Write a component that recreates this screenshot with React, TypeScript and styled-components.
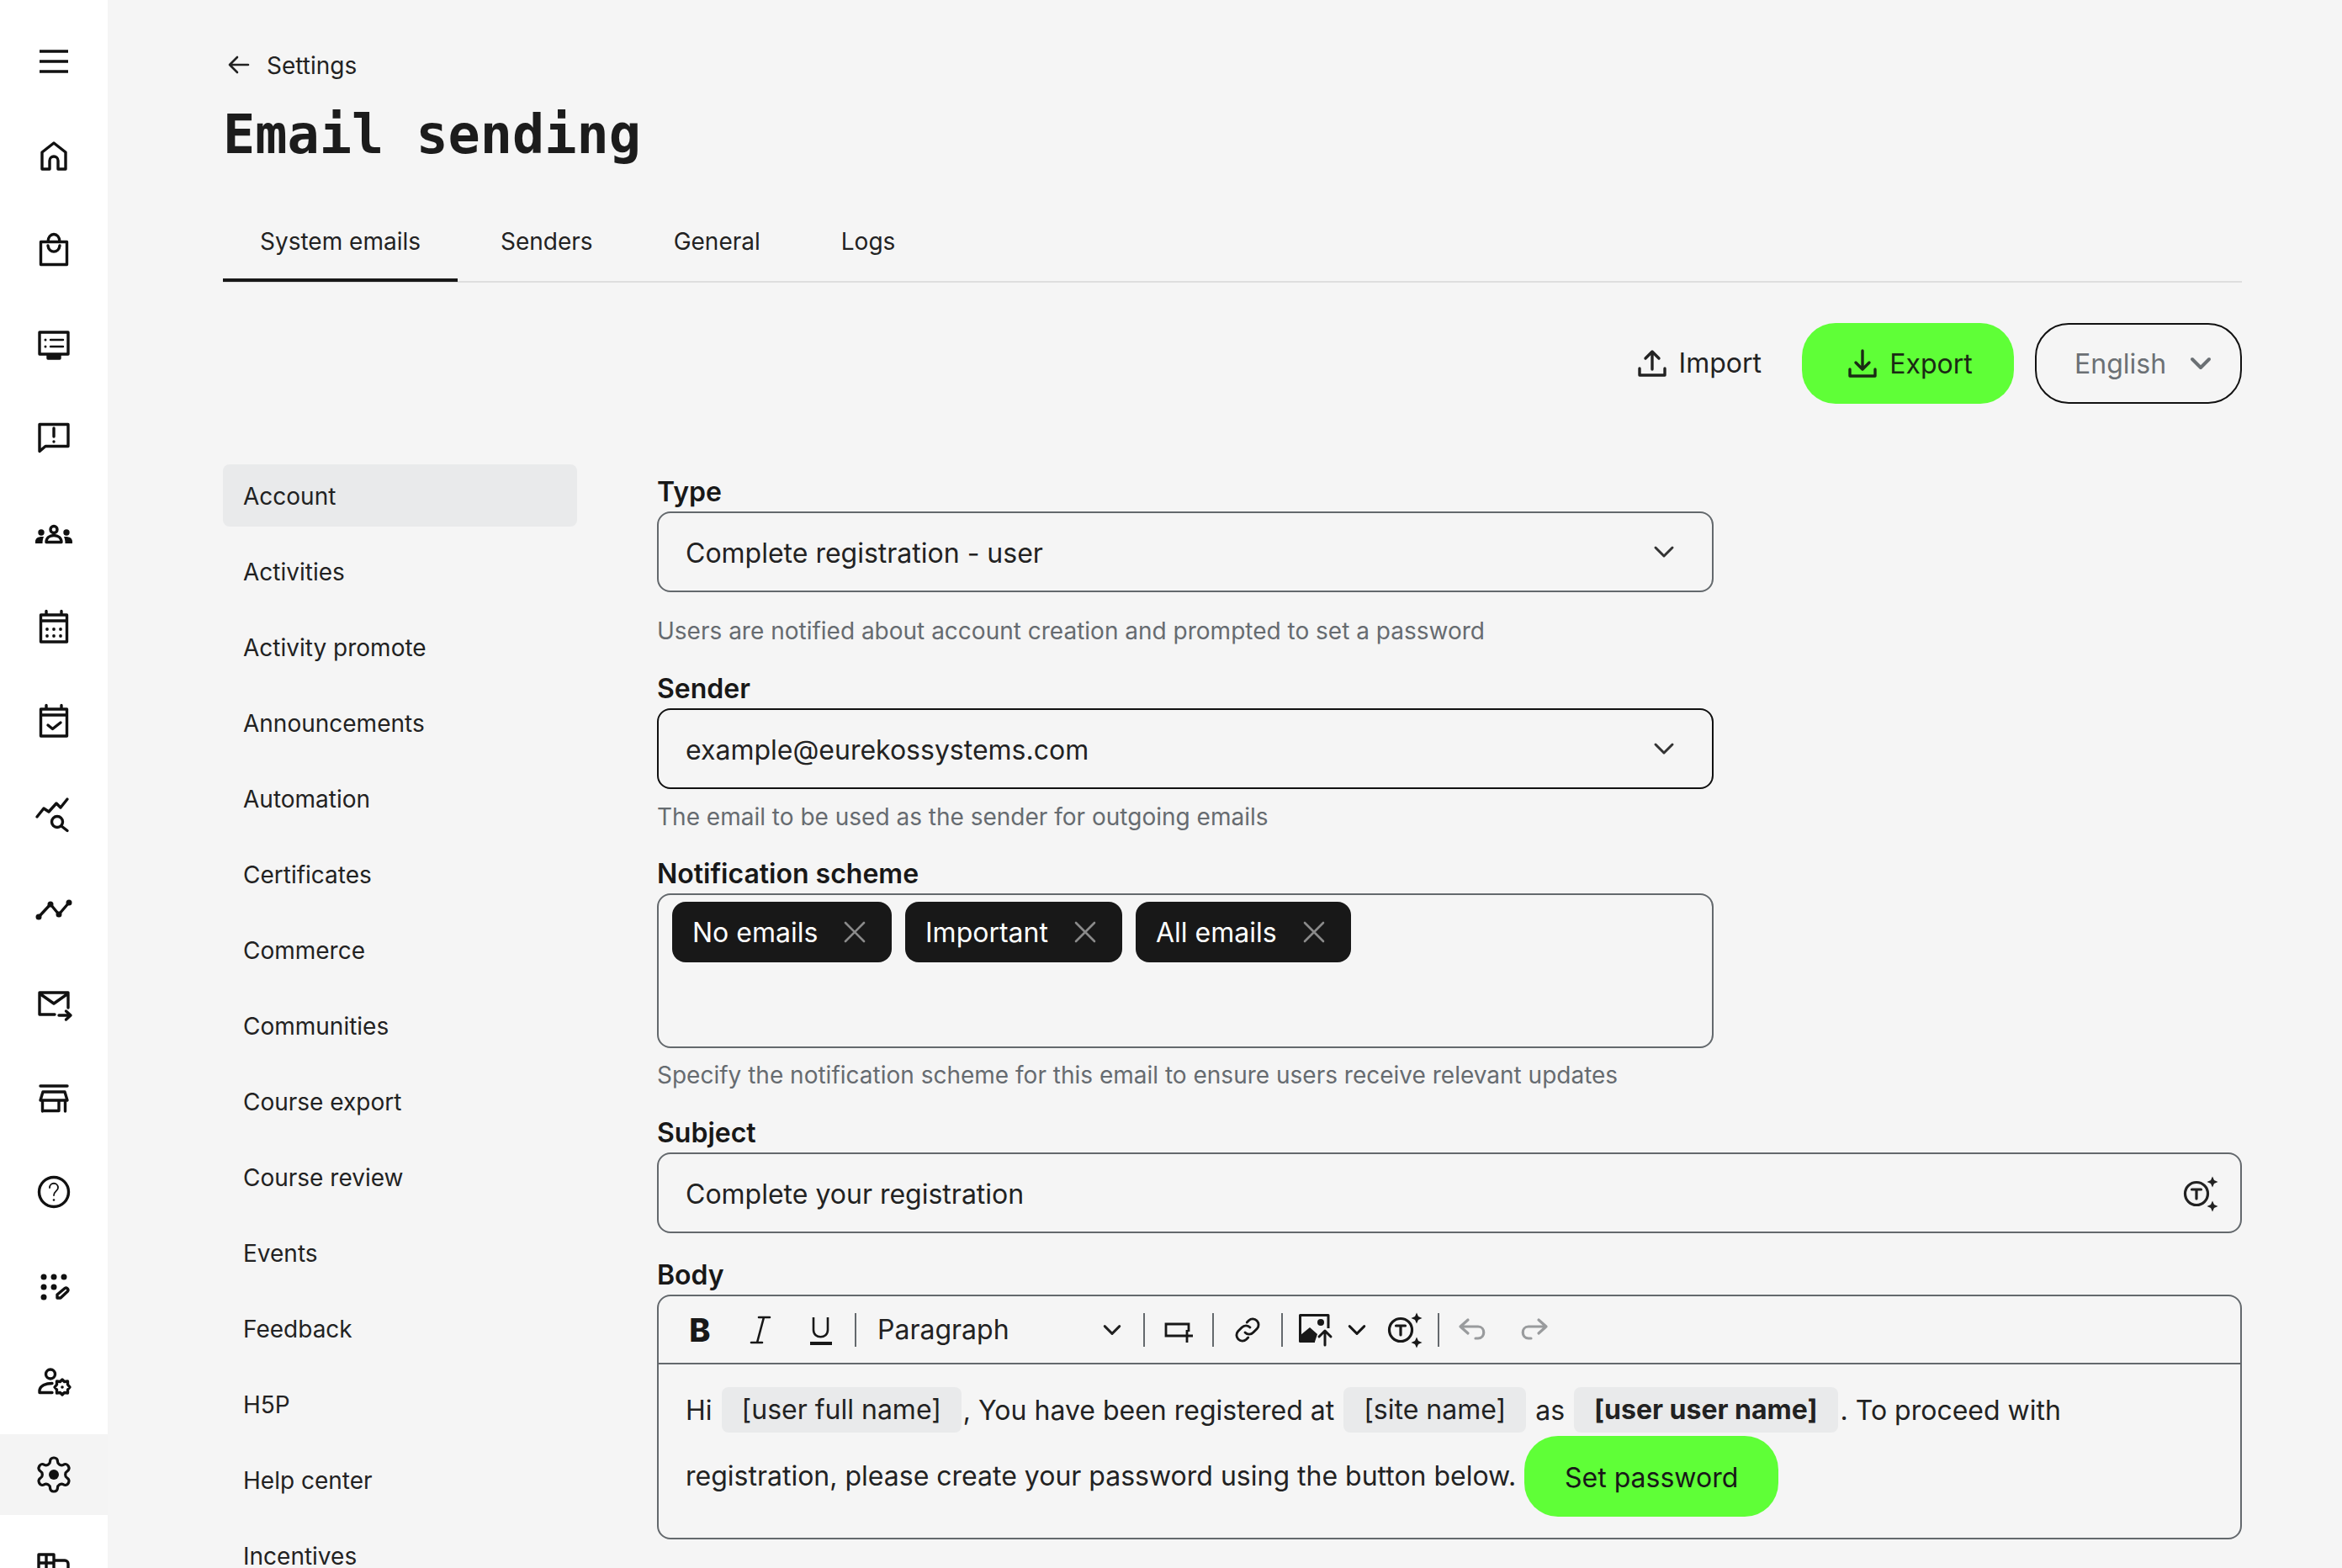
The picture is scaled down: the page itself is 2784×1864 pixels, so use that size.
import React from 'react';
import styled, { createGlobalStyle } from 'styled-components';

const Global = createGlobalStyle`
  html, body { margin: 0; padding: 0; height: 100%; overflow: hidden; background: #f5f5f5; }
  * { box-sizing: border-box; }
  #root { height: 100vh; overflow: hidden; }
`;

const Shell = styled.div`
  display: flex; height: 1864px; overflow: hidden;
  font-family: Inter, "Liberation Sans", sans-serif; color: #181818;
`;
const Rail = styled.nav`
  width: 128px; flex: none; background: #fff; padding-top: 25px;
  display: flex; flex-direction: column; gap: 16px; height: 100%; overflow: hidden;
`;
const RailItem = styled.div<{ $active?: boolean }>`
  height: 96px; flex: none; display: flex; align-items: center; justify-content: center;
  background: ${p => (p.$active ? '#f4f4f4' : 'transparent')};
  color: #111;
`;
const Main = styled.main`
  flex: 1; padding: 0 119px 0 137px; min-width: 0;
`;
const Crumb = styled.div`
  display: flex; align-items: center; gap: 17px; height: 40px; margin-top: 58px;
  font-size: 28px; color: #222; padding-left: 3px;
`;
const Title = styled.h1`
  margin: 24px 0 0; font-family: "DejaVu Sans Mono", "Liberation Mono", monospace;
  font-weight: 700; font-size: 63.5px; line-height: 76px; color: #1c1c1c;
`;
const Tabs = styled.div`
  display: flex; height: 106px; margin-top: 32px; border-bottom: 2px solid #dedede;
`;
const Tab = styled.div<{ $active?: boolean }>`
  height: 105px; padding: ${p => (p.$active ? '12px 44px 0 44px' : '12px 48px 0')};
  margin-right: ${p => (p.$active ? '3px' : '0')};
  display: flex; align-items: center; font-size: 28px; color: #222;
  border-bottom: 4px solid ${p => (p.$active ? '#181818' : 'transparent')};
`;
const Actions = styled.div`
  display: flex; justify-content: flex-end; align-items: center; height: 96px; margin-top: 48px; gap: 25px;
`;
const GhostButton = styled.div`
  display: flex; align-items: center; gap: 14px; font-size: 32px; color: #222; padding-right: 23px; height: 96px;
  padding-bottom: 2px;
`;
const PrimaryButton = styled.div<{ $inline?: boolean }>`
  display: flex; flex: none; align-items: center; justify-content: center; gap: 14px;
  height: 96px; border-radius: 40px; background: #5fff37; color: #1a2a14; font-size: 32px;
  width: ${p => (p.$inline ? '302px' : '252px')};
  ${p => (p.$inline ? 'margin: -8px 0 -10px 10px; padding-top: 2px; color:#181818;' : 'padding-left: 5px;')}
`;
const LangSelect = styled.div`
  width: 246px; height: 96px; border: 2px solid #111; border-radius: 40px; display: flex;
  align-items: center; justify-content: space-between; padding: 0 31px 0 45px;
  color: #6b7074; font-size: 32px;
`;
const Columns = styled.div`
  display: grid; grid-template-columns: 421px 1fr; column-gap: 95px; margin-top: 72px;
`;
const SideList = styled.div`
  display: flex; flex-direction: column; gap: 16px;
`;
const SideItem = styled.div<{ $active?: boolean }>`
  height: 74px; flex: none; display: flex; align-items: center; padding: 2px 0 0 24px;
  font-size: 28px; border-radius: 8px; color: #222; background: ${p => (p.$active ? '#e9eaeb' : 'transparent')};
`;
const Form = styled.div`
  display: flex; flex-direction: column; padding-top: 14px;
`;
const Label = styled.label`
  display: block; font-size: 32px; line-height: 38px; font-weight: 600; color: #181818; margin-bottom: 4px;
`;
const Field = styled.div<{ $wide?: boolean; $dark?: boolean }>`
  width: ${p => (p.$wide ? '100%' : '1256px')}; height: 96px; flex: none; border-radius: 16px;
  border: 2px solid ${p => (p.$dark ? '#111' : '#64696d')};
  display: flex; align-items: center; justify-content: space-between;
  padding: 2px 24px 0 32px; font-size: 32px; color: #222;
`;
const FieldChevron = styled.span`
  display: flex; margin: -2px 17px 0 0; color: #333;
`;
const Help = styled.p<{ $h: number; $top: number }>`
  margin: 0; font-size: 28px; line-height: 36px; color: #666b70;
  padding-top: ${p => p.$top}px; height: ${p => p.$h}px;
`;
const ChipBox = styled.div`
  width: 1256px; height: 184px; flex: none; border: 2px solid #64696d; border-radius: 16px;
  padding: 8px 16px; display: flex; gap: 16px; align-items: flex-start;
`;
const Chip = styled.div<{ $w: number }>`
  width: ${p => p.$w}px; height: 72px; background: #181818; border-radius: 16px; color: #fff;
  display: flex; align-items: center; justify-content: space-between; padding: 0 28px 0 24px; font-size: 32px;
`;
const Gap = styled.div<{ $h: number }>`
  height: ${p => p.$h}px; flex: none;
`;
const Editor = styled.div`
  width: 100%; height: 291px; flex: none; border: 2px solid #64696d; border-radius: 16px; overflow: hidden;
`;
const Toolbar = styled.div`
  height: 81px; border-bottom: 2px solid #64696d; display: flex; align-items: center; padding-left: 25px; gap: 16px;
`;
const ToolGroup = styled.div<{ $gap: number }>`
  display: flex; align-items: center; gap: ${p => p.$gap}px;
`;
const ToolBtn = styled.div<{ $w?: number; $muted?: boolean }>`
  width: ${p => p.$w || 48}px; height: 48px; display: flex; align-items: center; justify-content: center;
  color: ${p => (p.$muted ? '#999b9d' : '#181818')};
`;
const BoldGlyph = styled.span`
  font-weight: 800; font-size: 38px;
`;
const Divider = styled.div`
  width: 2px; height: 40px; background: #64696d;
`;
const ParaSelect = styled.div`
  width: 309px; display: flex; align-items: center; justify-content: space-between;
  font-size: 32px; padding: 0 7px 0 9px; color: #222;
`;
const EditorBody = styled.div`
  padding: 15px 32px 0;
  font-size: 32px; color: #222;
`;
const EditorLine = styled.div`
  display: flex; align-items: center; height: 78px; white-space: nowrap;
`;
const Token = styled.span<{ $bold?: boolean; $after: number }>`
  display: block; height: 54px; line-height: 54px; padding: 0 24px; margin: 0 ${p => p.$after}px 0 11px; background: #e9eaeb; border-radius: 8px;
  font-weight: ${p => (p.$bold ? 700 : 400)};
`;

const I: React.FC<{ children: React.ReactNode; sw?: number; size?: number }> = ({ children, sw = 3.4, size = 48 }) => (
  <svg width={size} height={size} viewBox="0 0 48 48" fill="none" stroke="currentColor" strokeWidth={sw} strokeLinecap="round" strokeLinejoin="round">{children}</svg>
);
const Dot = ({ x, y, r = 3.2 }: { x: number; y: number; r?: number }) => <circle cx={x} cy={y} r={r} fill="currentColor" stroke="none" />;

const rail: React.ReactNode[] = [
  <I key="m" sw={3.6}><path d="M7 12h34M7 24h34M7 36h34" strokeLinecap="butt" /></I>,
  <I key="h"><path d="M24 9 10 20v20h9V30a5 5 0 0 1 10 0v10h9V20Z" /></I>,
  <I key="b"><path d="M8.500 14.500h31v27h-31zM17 14.500c0-12 14-12 14 0M17 19c1 9.500 13 9.500 14 0" /></I>,
  <I key="l"><path d="M7 10h34v26H7z" /><path d="M17 37h14v4H17z" fill="currentColor" /><path d="M20 19h15M20 27h15" strokeWidth="2.400" /><Dot x={14} y={19} r={1.500} /><Dot x={14} y={27} r={1.500} /></I>,
  <I key="a"><path d="M7 7.500h34v26H14l-7 6z" /><path d="M24 12v10" /><Dot x={24} y={28} r={1.700} /></I>,
  <I key="g"><circle cx="24" cy="20.500" r="4" /><Dot x={9} y={24} r={3.700} /><Dot x={39} y={24} r={3.700} /><path d="M15 35.500c0-5 4-8 9-8s9 3 9 8Z" /><path d="M2 37v-2c0-4 3-6 8-6h2c-1 2-1.500 5-1.500 8ZM46 37v-2c0-4-3-6-8-6h-2c1 2 1.500 5 1.500 8Z" fill="currentColor" stroke="none" /></I>,
  <I key="c"><path d="M8.500 10h31v32h-31zM8.500 17h31M15 5.500V10M33 5.500V10" /><Dot x={16} y={27} r={1.900} /><Dot x={24} y={27} r={1.900} /><Dot x={32} y={27} r={1.900} /><Dot x={16} y={35} r={1.900} /><Dot x={24} y={35} r={1.900} /><Dot x={32} y={35} r={1.900} /></I>,
  <I key="cc"><path d="M8.500 10h31v32h-31zM8.500 17h31M15 5.500V10M33 5.500V10" /><path d="M17 29l5.500 4.500L32 26" /></I>,
  <I key="s"><path d="M4 26l8-10 6 4 9-10 5 5 8-10" /><circle cx="28" cy="32" r="6.500" /><path d="M33 37l7 5.500" /></I>,
  <I key="t"><path d="M6 33 20 18l10 12 12-14" /><Dot x={6} y={33} r={3.500} /><Dot x={20} y={18} r={3.500} /><Dot x={30} y={30} r={3.500} /><Dot x={42} y={16} r={3.500} /></I>,
  <I key="e"><path d="M25 37H7V11h34v18M7 12l17 12 17-12" /><path d="M30 38h14M38.500 33l5.500 5-5.500 5" /></I>,
  <I key="st"><path d="M8 10h32" /><path d="M11 17h26l3 10H8ZM10.500 27v13M37.500 27v13M10.500 39.500H30V27" /></I>,
  <I key="q"><circle cx="24" cy="24" r="17.500" /><path d="M19 19c0-7 10-7 10 0 0 4-5 4-5 9" strokeWidth="1.800" /><Dot x={24} y={33.500} r={1.300} /></I>,
  <I key="d"><Dot x={12} y={13} r={3.500} /><Dot x={24} y={13} r={3.500} /><Dot x={36} y={13} r={3.500} /><Dot x={12} y={25} r={3.500} /><Dot x={24} y={25} r={3.500} /><Dot x={12} y={37} r={3.500} /><path d="M28 38v-4l9-7.500c2-1.500 5 1 3.500 3.500L32 38Z" /></I>,
  <I key="u"><circle cx="20" cy="16.500" r="5.500" /><path d="M22 27.500c-8 0-14 3-15 8v3h15" /><path d="M34 23l2.500 2.500 4-.5v4l2.500 3-2.500 3v4l-4-.5L34 41l-2.500-2.500-4 .5v-4L25 32l2.500-3v-4l4 .5Z" /><Dot x={34} y={32} r={1.800} /></I>,
  <I key="gear"><g transform="scale(2)" strokeWidth="1.600"><path d="M12.220 2h-.44a2 2 0 0 0-2 2v.18a2 2 0 0 1-1 1.730l-.43.250a2 2 0 0 1-2 0l-.15-.080a2 2 0 0 0-2.730.730l-.22.380a2 2 0 0 0 .730 2.730l.15.100a2 2 0 0 1 1 1.720v.510a2 2 0 0 1-1 1.740l-.15.090a2 2 0 0 0-.730 2.730l.22.380a2 2 0 0 0 2.730.730l.15-.080a2 2 0 0 1 2 0l.43.250a2 2 0 0 1 1 1.730V20a2 2 0 0 0 2 2h.44a2 2 0 0 0 2-2v-.18a2 2 0 0 1 1-1.730l.43-.250a2 2 0 0 1 2 0l.15.080a2 2 0 0 0 2.730-.730l.22-.390a2 2 0 0 0-.730-2.730l-.15-.080a2 2 0 0 1-1-1.740v-.500a2 2 0 0 1 1-1.740l.15-.090a2 2 0 0 0 .730-2.730l-.22-.380a2 2 0 0 0-2.730-.730l-.15.080a2 2 0 0 1-2 0l-.43-.250a2 2 0 0 1-1-1.730V4a2 2 0 0 0-2-2z" /></g><Dot x={24} y={24} r={6} /></I>,
  <I key="o"><path d="M6 42V7h18v35ZM15 7v20M6 17h18M6 27h18M24 14h13a4 4 0 0 1 4 4v24H6" /></I>,
];

const Chev = ({ size = 32, sw = 3 }: { size?: number; sw?: number }) => (
  <svg width={size} height={size} viewBox="0 0 32 32" fill="none" stroke="currentColor" strokeWidth={sw} strokeLinecap="round" strokeLinejoin="round"><path d="M6 11l10 10 10-10" /></svg>
);
const X = () => (
  <svg width="32" height="32" viewBox="0 0 32 32" fill="none" stroke="#8a8a8a" strokeWidth="2.600" strokeLinecap="round"><path d="M5 5l22 22M27 5 5 27" /></svg>
);
const TSpark = () => (
  <I sw={3.2}><circle cx="20" cy="24" r="13.500" /><path d="M14.500 19h11M20 19v11" /><path d="M39 3.500l2 4.500 4.500 2-4.500 2-2 4.500-2-4.500-4.500-2 4.500-2ZM39 32.500l2 4.500 4.500 2-4.500 2-2 4.500-2-4.500-4.500-2 4.500-2Z" fill="currentColor" stroke="none" /></I>
);

const sections = ['Account', 'Activities', 'Activity promote', 'Announcements', 'Automation', 'Certificates', 'Commerce', 'Communities', 'Course export', 'Course review', 'Events', 'Feedback', 'H5P', 'Help center', 'Incentives'];

export default function App() {
  return (
    <Shell>
      <Global />
      <Rail>
        {rail.map((icon, i) => <RailItem key={i} $active={i === 15}>{icon}</RailItem>)}
      </Rail>
      <Main>
        <Crumb>
          <svg width="32" height="32" viewBox="0 0 32 32" fill="none" stroke="currentColor" strokeWidth="2.600" strokeLinecap="round" strokeLinejoin="round"><path d="M27 15H5M14 6l-9 9 9 9" /></svg>
          <span>Settings</span>
        </Crumb>
        <Title>Email sending</Title>
        <Tabs>
          <Tab $active>System emails</Tab>
          <Tab>Senders</Tab>
          <Tab>General</Tab>
          <Tab>Logs</Tab>
        </Tabs>
        <Actions>
          <GhostButton>
            <svg width="36" height="36" viewBox="0 0 36 36" fill="none" stroke="currentColor" strokeWidth="3.400" strokeLinecap="round" strokeLinejoin="round"><path d="M18 26V6M10 13l8-8 8 8M3 25v8h30v-8" /></svg>
            Import
          </GhostButton>
          <PrimaryButton>
            <svg width="36" height="36" viewBox="0 0 36 36" fill="none" stroke="currentColor" strokeWidth="3.400" strokeLinecap="round" strokeLinejoin="round"><path d="M18 3v21M10 17l8 8 8-8M3 25v8h30v-8" /></svg>
            Export
          </PrimaryButton>
          <LangSelect>English<Chev sw={4} /></LangSelect>
        </Actions>
        <Columns>
          <SideList>
            {sections.map((s, i) => <SideItem key={s} $active={i === 0}>{s}</SideItem>)}
          </SideList>
          <Form>
            <Label>Type</Label>
            <Field>Complete registration - user<FieldChevron><Chev /></FieldChevron></Field>
            <Help $h={96} $top={28}>Users are notified about account creation and prompted to set a password</Help>
            <Label>Sender</Label>
            <Field $dark>example@eurekossystems.com<FieldChevron><Chev /></FieldChevron></Field>
            <Help $h={82} $top={15}>The email to be used as the sender for outgoing emails</Help>
            <Label>Notification scheme</Label>
            <ChipBox>
              <Chip $w={261}>No emails<X /></Chip>
              <Chip $w={258}>Important<X /></Chip>
              <Chip $w={256}>All emails<X /></Chip>
            </ChipBox>
            <Help $h={82} $top={14}>Specify the notification scheme for this email to ensure users receive relevant updates</Help>
            <Label>Subject</Label>
            <Field $wide>Complete your registration<TSpark /></Field>
            <Gap $h={31} />
            <Label>Body</Label>
            <Editor>
              <Toolbar>
                <ToolGroup $gap={24}>
                  <ToolBtn><BoldGlyph>B</BoldGlyph></ToolBtn>
                  <ToolBtn>
                    <svg width="32" height="36" viewBox="0 0 32 36" fill="none" stroke="currentColor" strokeWidth="2.600" strokeLinecap="round"><path d="M14 3h13M5 33h13M20 3l-8 30" /></svg>
                  </ToolBtn>
                  <ToolBtn>
                    <svg width="32" height="36" viewBox="0 0 32 36" fill="none" stroke="currentColor" strokeWidth="2.600"><path d="M7 3v15c0 11 17 11 17 0V3" /><path d="M3 34h26" strokeWidth="4" /></svg>
                  </ToolBtn>
                </ToolGroup>
                <Divider />
                <ParaSelect>Paragraph<Chev size={28} sw={3.400} /></ParaSelect>
                <Divider />
                <ToolBtn>
                  <svg width="36" height="36" viewBox="0 0 36 36" fill="none" stroke="currentColor" strokeWidth="2.800"><path d="M30 20V11H3v14h18M28 18v15M21 25h14" /></svg>
                </ToolBtn>
                <Divider />
                <ToolBtn>
                  <svg width="36" height="36" viewBox="0 0 24 24" fill="none" stroke="currentColor" strokeWidth="1.900" strokeLinecap="round" strokeLinejoin="round"><path d="M10 14a4.500 4.500 0 0 0 6.500 0l3-3a4.600 4.600 0 0 0-6.500-6.500l-1.500 1.500M14 10a4.500 4.500 0 0 0-6.500 0l-3 3a4.600 4.600 0 0 0 6.500 6.500l1.500-1.500" /></svg>
                </ToolBtn>
                <Divider />
                <ToolGroup $gap={16}>
                  <ToolGroup $gap={8}>
                    <ToolBtn>
                      <svg width="44" height="44" viewBox="0 0 44 44" fill="none"><path d="M36 20V4.500H2.500V35.500H20" stroke="#181818" strokeWidth="3" strokeLinejoin="round" /><path d="M3 36V28L14 19L23 27L20 36Z" fill="#181818" /><circle cx="27" cy="13" r="4" fill="#181818" /><path d="M32 40V23M25 30l7-7 7 7" stroke="#181818" strokeWidth="3" strokeLinecap="round" strokeLinejoin="round" /></svg>
                    </ToolBtn>
                    <ToolBtn $w={32}><Chev size={28} sw={3.400} /></ToolBtn>
                  </ToolGroup>
                  <ToolBtn><TSpark /></ToolBtn>
                </ToolGroup>
                <Divider />
                <ToolGroup $gap={24}>
                  <ToolBtn $muted>
                    <svg width="36" height="36" viewBox="0 0 36 36" fill="none" stroke="currentColor" strokeWidth="3.200" strokeLinecap="round" strokeLinejoin="round"><path d="M12 6l-9 8 9 8M3 14h21c9 0 9 14 0 14h-3" /></svg>
                  </ToolBtn>
                  <ToolBtn $muted>
                    <svg width="36" height="36" viewBox="0 0 36 36" fill="none" stroke="currentColor" strokeWidth="3.200" strokeLinecap="round" strokeLinejoin="round"><path d="M24 6l9 8-9 8M33 14H12c-9 0-9 14 0 14h3" /></svg>
                  </ToolBtn>
                </ToolGroup>
              </Toolbar>
              <EditorBody>
                <EditorLine>
                  <span>Hi</span>
                  <Token $after={2}>[user full name]</Token>
                  <span>, You have been registered at</span>
                  <Token $after={11}>[site name]</Token>
                  <span>as</span>
                  <Token $bold $after={3}>[user user name]</Token>
                  <span>. To proceed with</span>
                </EditorLine>
                <EditorLine>
                  <span>registration, please create your password using the button below.</span>
                  <PrimaryButton $inline>Set password</PrimaryButton>
                </EditorLine>
              </EditorBody>
            </Editor>
          </Form>
        </Columns>
      </Main>
    </Shell>
  );
}
